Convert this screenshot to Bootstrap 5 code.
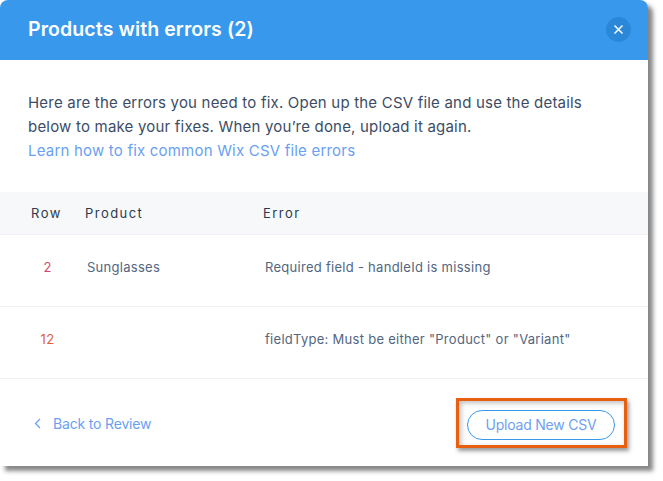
<!DOCTYPE html>
<html lang="en">
<head>
<meta charset="utf-8">
<title>Products with errors</title>
<link href="https://cdn.jsdelivr.net/npm/bootstrap@5.3.0/dist/css/bootstrap.min.css" rel="stylesheet">
<style>
html,body{margin:0;background:#fff;overflow:hidden}
body{font-family:Inter,"Liberation Sans",sans-serif;width:663px;height:481px;color:#32445c}
.dlg{width:648px;height:466px;background:#fff;border-radius:8px 8px 0 0;box-shadow:5px 5px 4px rgba(70,70,70,.65)}
.dlg-head{height:60px;background:#3899ec;border-radius:8px 8px 0 0;padding:0 17px 0 28px}
.dlg-title{font-size:19.5px;font-weight:600;letter-spacing:.1px;line-height:1;margin:0;color:#fff}
.dlg-close{width:25px;height:25px;padding:0;border:0;border-radius:50%;background:#2b88d8;display:flex;align-items:center;justify-content:center}
.dlg-intro{height:132px;padding:31px 50px 0 28px;font-size:15px;line-height:24px;color:#3b4d66;letter-spacing:.2px}
.dlg-intro a,.back-lnk{color:#6a9ff2;text-decoration:none}
.err-table{table-layout:fixed;width:648px;margin:0;font-size:13px}
.err-table th,.err-table td{padding:0;border-bottom:1px solid #f0f2f5;vertical-align:middle;color:#52667f;font-weight:400}
.err-table th{height:43px;background:#f7f8fa;color:#2b3a4d;font-size:13px;letter-spacing:1.45px;padding-top:1px}
.err-table td{height:72px;letter-spacing:.28px;padding-bottom:6px}
.c1{width:85px}.c2{width:178px}
.err-table th.c1{padding-left:31px}
.err-table td.c1{padding-left:10px;text-align:center}
.err-table td.c2{padding-left:2px}
.err-table td.c3{padding-left:2px}
.err-table th.c3{padding-left:0}
.num-a{color:#d6476b!important}.num-b{color:#e0603a!important}
.dlg-foot{height:87px;padding:0 21px 0 34px}
.back-lnk{font-size:14px;letter-spacing:-.17px;gap:12px;padding-top:2px}
.mark-box{border:3px solid #e8600f;padding:9px 9px 5px 8px;box-shadow:2px 3px 4px rgba(70,70,70,.55),inset 2px 2px 5px rgba(70,70,70,.35);height:50px}
.up-btn{width:148px;height:30px;border:1px solid #3899ec;border-radius:15px;background:#fff;color:#6f9ff0;font-size:14px;padding:0;line-height:1;letter-spacing:-.22px}
</style>
</head>
<body>
<div class="dlg d-flex flex-column">
  <div class="dlg-head d-flex align-items-center justify-content-between">
    <h1 class="dlg-title">Products with errors (2)</h1>
    <button class="dlg-close" type="button" aria-label="Close"><svg width="11" height="11" viewBox="0 0 11 11"><path d="M1.5 1.5l8 8M9.5 1.5l-8 8" stroke="#fff" stroke-width="1.5" fill="none"/></svg></button>
  </div>
  <div class="dlg-intro">Here are the errors you need to fix. Open up the CSV file and use the details below to make your fixes. When you’re done, upload it again.<br><a href="#">Learn how to fix common Wix CSV file errors</a></div>
  <table class="table err-table">
    <thead><tr><th class="c1">Row</th><th class="c2">Product</th><th class="c3">Error</th></tr></thead>
    <tbody>
      <tr><td class="c1 num-a">2</td><td class="c2">Sunglasses</td><td class="c3">Required field - handleId is missing</td></tr>
      <tr><td class="c1 num-b">12</td><td class="c2"></td><td class="c3">fieldType: Must be either "Product" or "Variant"</td></tr>
    </tbody>
  </table>
  <div class="dlg-foot d-flex align-items-center justify-content-between">
    <a class="back-lnk d-flex align-items-center" href="#"><svg width="7" height="11" viewBox="0 0 7 11"><path d="M6 1L1.5 5.5 6 10" stroke="#6a9ff2" stroke-width="1.2" fill="none"/></svg><span>Back to Review</span></a>
    <div class="mark-box"><button class="up-btn d-block" type="button">Upload New CSV</button></div>
  </div>
</div>
<script src="https://cdn.jsdelivr.net/npm/bootstrap@5.3.0/dist/js/bootstrap.bundle.min.js"></script>
</body>
</html>
